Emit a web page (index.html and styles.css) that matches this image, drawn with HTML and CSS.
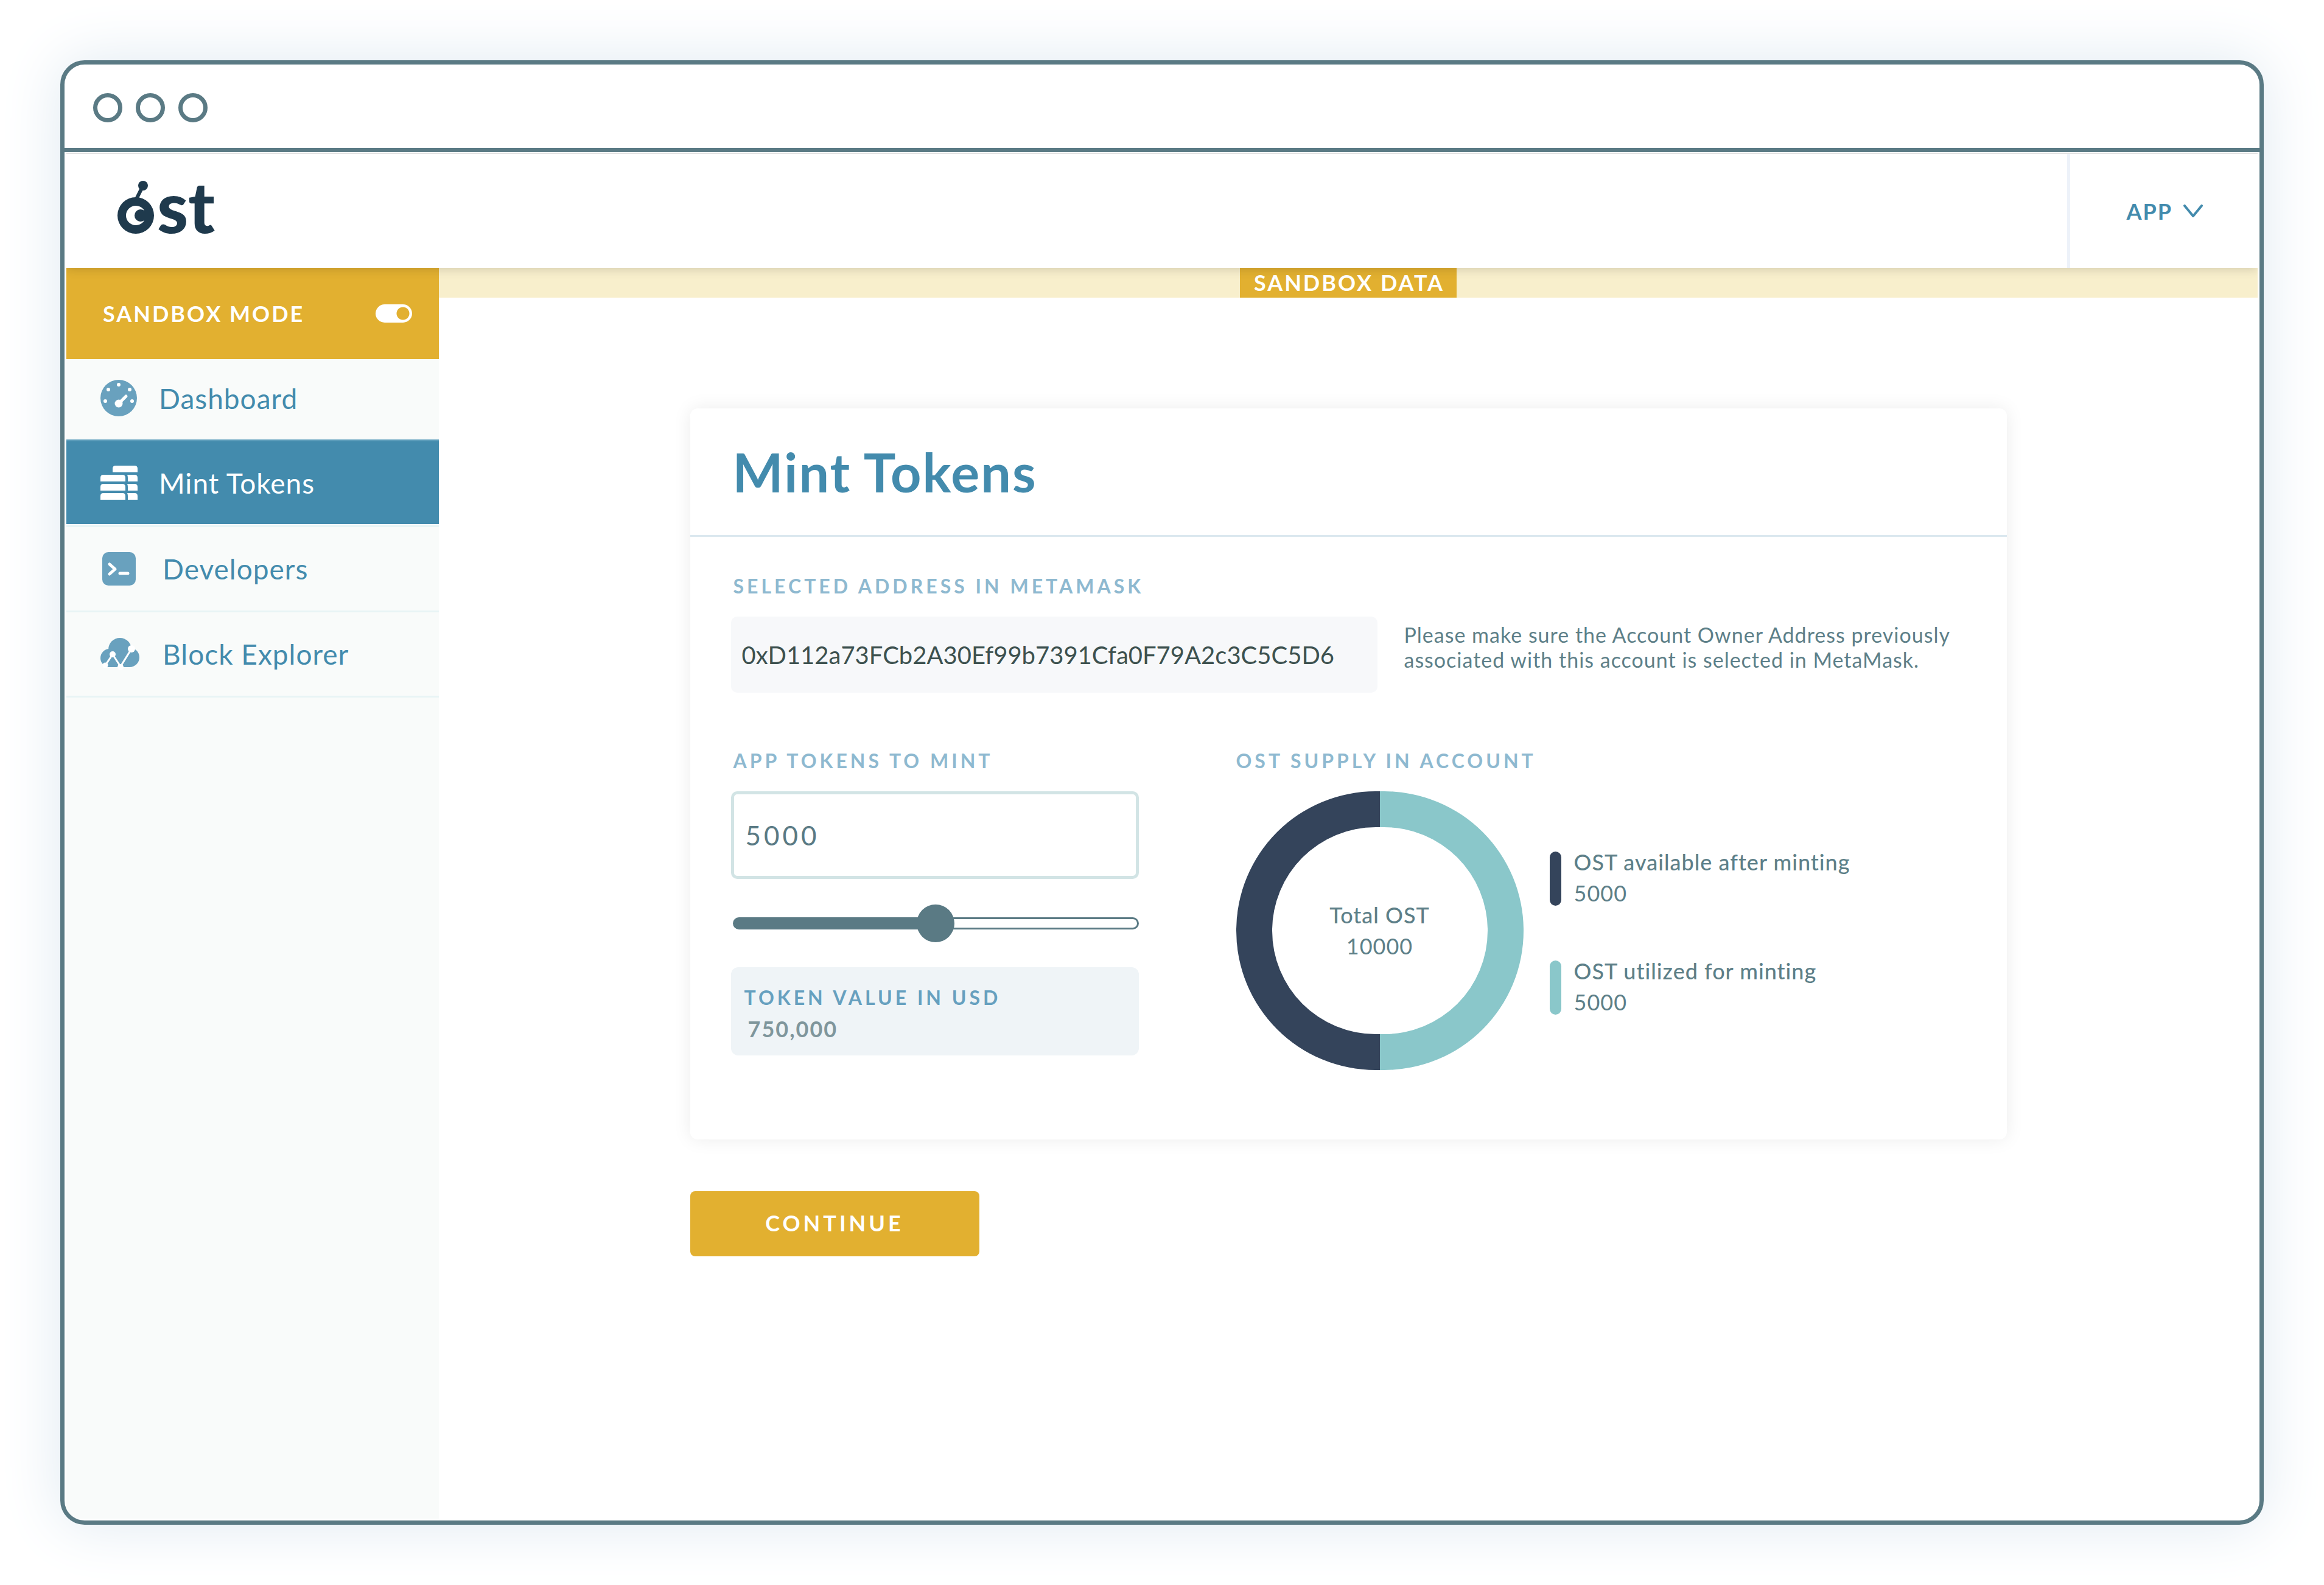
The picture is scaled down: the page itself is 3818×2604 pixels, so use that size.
FILE: index.html
```html
<!DOCTYPE html>
<html lang="en">
<head>
  <meta charset="utf-8">
  <meta name="viewport" content="width=device-width, initial-scale=1">
  <title>Mint Tokens</title>
  <link rel="stylesheet" href="styles.css">
</head>
<body>
  <div class="window">
    <div class="titlebar">
      <span class="dot"></span>
      <span class="dot"></span>
      <span class="dot"></span>
    </div>
    <div class="app">
      <header class="header">
        <a class="brand" href="#" aria-label="ost">
          <svg class="logo" viewBox="0 0 166 88" width="166" height="88">
            <circle cx="42" cy="8" r="8"/>
            <path class="antenna" d="M41 10 31 30"/>
            <path fill-rule="evenodd" d="M30 27a30 30 0 1 1 0 60a30 30 0 1 1 0-60zM30 41a16 16 0 1 0 0 32c7 0 12-4 14-8a10 10 0 1 1 0-16c-2-4-7-8-14-8z"/>
            <text x="65" y="86">st</text>
          </svg>
        </a>
        <button class="app-menu" type="button">
          APP
          <svg viewBox="0 0 32 22" width="32" height="22" aria-hidden="true"><path d="M2 2 16 19 30 2"/></svg>
        </button>
      </header>
      <div class="columns">
        <aside class="sidebar">
          <label class="mode">
            SANDBOX MODE
            <input class="switch" type="checkbox" role="switch" checked>
          </label>
          <nav>
            <a class="nav-link nav-link-first" href="#">
              <svg class="icon" viewBox="0 0 61 61" width="61" height="61" aria-hidden="true">
                <circle class="shape" cx="30" cy="30" r="30"/>
                <g class="cut">
                  <circle cx="30" cy="8" r="3"/>
                  <circle cx="13" cy="16" r="3"/>
                  <circle cx="48" cy="16" r="3"/>
                  <circle cx="8" cy="35" r="3"/>
                  <circle cx="52" cy="35" r="3"/>
                  <circle cx="30" cy="39" r="6.5"/>
                </g>
                <path class="cut-line" d="M31 38 42 27"/>
              </svg>
              Dashboard
            </a>
            <a class="nav-link nav-link-current" href="#" aria-current="page">
              <svg class="icon" viewBox="0 0 61 56" width="61" height="56" aria-hidden="true">
                <g class="cut">
                  <path d="M20 11V5q0-5 5-5h31q5 0 5 5v6z"/>
                  <path d="M0 26v-6q0-5 5-5h31q5 0 5 5v6zM0 41v-6q0-5 5-5h31q5 0 5 5v6zM0 56v-6q0-5 5-5h31q5 0 5 5v6z"/>
                  <path d="M45 26v-6q0-3-1-5h12q5 0 5 5v6zM45 41v-6q0-3-1-5h12q5 0 5 5v6zM45 56v-6q0-3-1-5h12q5 0 5 5v6z"/>
                </g>
              </svg>
              Mint Tokens
            </a>
            <a class="nav-link nav-link-ruled" href="#">
              <svg class="icon" viewBox="0 0 61 56" width="61" height="56" aria-hidden="true">
                <rect class="shape" x="3" width="55" height="55" rx="10"/>
                <path class="cut-line" d="M15 20 24 28 15 36M32 35H45"/>
              </svg>
              Developers
            </a>
            <a class="nav-link nav-link-ruled nav-link-last" href="#">
              <svg class="icon" viewBox="0 0 61 56" width="61" height="56" aria-hidden="true">
                <g class="shape">
                  <circle cx="32" cy="20" r="19"/>
                  <circle cx="15" cy="34" r="15"/>
                  <circle cx="48" cy="33" r="16"/>
                  <path d="M15 30H48V49H10z"/>
                </g>
                <path class="cut-thin" d="M8 46 20 28 33 48 51 19"/>
                <g class="cut">
                  <circle cx="8" cy="46" r="4.5"/>
                  <circle cx="20" cy="28" r="5"/>
                  <circle cx="33" cy="49" r="5"/>
                  <circle cx="51" cy="19" r="6"/>
                </g>
              </svg>
              Block Explorer
            </a>
          </nav>
        </aside>
        <div class="content">
          <div class="banner"><span class="banner-tag">SANDBOX DATA</span></div>
          <main class="main">
            <section class="card">
              <h1 class="card-title">Mint Tokens</h1>
              <div class="card-body">
                <label class="label" for="address">SELECTED ADDRESS IN METAMASK</label>
                <div class="address-row">
                  <input class="address" id="address" type="text" readonly value="0xD112a73FCb2A30Ef99b7391Cfa0F79A2c3C5C5D6">
                  <p class="note">Please make sure the Account Owner Address previously<br>associated with this account is selected in MetaMask.</p>
                </div>
                <div class="mint-row">
                  <div class="mint">
                    <label class="label" for="amount">APP TOKENS TO MINT</label>
                    <input class="amount" id="amount" type="text" inputmode="numeric" value="5000">
                    <input class="slider" type="range" min="0" max="10000" value="5000" aria-label="App tokens to mint">
                    <div class="usd">
                      <h2 class="usd-label">TOKEN VALUE IN USD</h2>
                      <p class="usd-value">750,000</p>
                    </div>
                  </div>
                  <div class="supply">
                    <h2 class="label">OST SUPPLY IN ACCOUNT</h2>
                    <div class="chart-row">
                      <div class="chart">
                        <svg viewBox="0 0 472 458" width="472" height="458" aria-hidden="true">
                          <path class="available" d="M236 0H229a229 229 0 0 0 0 458H236V399H229a170 170 0 0 1 0-340H236z"/>
                          <path class="utilized" d="M236 0H243a229 229 0 0 1 0 458H236V399H243a170 170 0 0 0 0-340H236z"/>
                        </svg>
                        <p class="total"><span class="name">Total OST</span><span>10000</span></p>
                      </div>
                      <ul class="legend">
                        <li class="legend-available"><span class="name">OST available after minting</span><span>5000</span></li>
                        <li class="legend-utilized"><span class="name">OST utilized for minting</span><span>5000</span></li>
                      </ul>
                    </div>
                  </div>
                </div>
              </div>
            </section>
            <button class="continue" type="button">CONTINUE</button>
          </main>
        </div>
      </div>
    </div>
  </div>
</body>
</html>
```
FILE: styles.css
```css
* {
  box-sizing: border-box;
  margin: 0;
  padding: 0;
}

:root {
  --slate: #5a7a84;
  --blue: #438bad;
  --blue-soft: #69a1be;
  --blue-pale: #8eb9d0;
  --gold: #e2b030;
  --navy: #34445b;
  --teal: #8ac7ca;
  --text: #5d7f88;
}

body {
  display: flex;
  min-height: 100vh;
  padding: 99px;
  background: #fff;
  color: var(--text);
  font-family: Lato, "Open Sans", sans-serif;
  font-size: 36px;
}

input,
button {
  border: 0;
  font: inherit;
}

a {
  color: inherit;
  text-decoration: none;
}

/* Browser window */

.window {
  display: flex;
  flex: 1;
  flex-direction: column;
  overflow: hidden;
  border: 7px solid var(--slate);
  border-radius: 40px;
  background: #fff;
  box-shadow: 0 0 100px #dfe9f1;
}

.titlebar {
  display: flex;
  gap: 22px;
  padding: 47px 47px 42px;
  border-bottom: 7px solid var(--slate);
}

.dot {
  width: 48px;
  height: 48px;
  border: 7px solid var(--slate);
  border-radius: 50%;
}

.app {
  display: flex;
  flex: 1;
  flex-direction: column;
  padding: 2px 3px 3px;
}

/* Header */

.header {
  position: relative;
  display: flex;
  justify-content: space-between;
  height: 188px;
  border-top: 1px solid #d8d8d8;
  background: #fff;
  box-shadow: 0 2px 16px rgba(0, 0, 0, 0.16);
  clip-path: inset(0 0 -30px 0);
}

.brand {
  padding: 44px 84px 0;
}

.logo {
  display: block;
  fill: #1f3a4d;
  font-size: 116px;
  font-weight: 900;
  overflow: visible;
}

.antenna {
  stroke: #1f3a4d;
  stroke-width: 6px;
}

.app-menu {
  display: flex;
  align-items: center;
  gap: 18px;
  padding: 0 90px 0 92px;
  border-left: 5px solid #edf2f9;
  background: none;
  color: var(--blue);
  font-weight: 700;
  letter-spacing: 2px;
}

.app-menu svg {
  fill: none;
  stroke: var(--blue);
  stroke-width: 4px;
  stroke-linecap: round;
  stroke-linejoin: round;
}

/* Sidebar */

.columns {
  display: flex;
  flex: 1;
}

.sidebar {
  width: 612px;
  background: #f9fbfa;
}

.mode {
  display: flex;
  align-items: center;
  justify-content: space-between;
  height: 150px;
  padding: 0 44px 0 60px;
  background: var(--gold);
  color: #fff;
  font-weight: 700;
  letter-spacing: 3px;
}

.switch {
  width: 60px;
  height: 30px;
  border-radius: 15px;
  appearance: none;
  background: radial-gradient(circle at 45px 15px, var(--gold) 10px, #fff 11px);
}

.nav-link {
  display: flex;
  align-items: center;
  gap: 35px;
  height: 132px;
  padding-left: 56px;
  color: var(--blue);
  font-size: 46px;
  letter-spacing: 1px;
}

.nav-link-first {
  padding-bottom: 4px;
}

.nav-link-current {
  height: 139px;
  margin-bottom: 2px;
  border-top: 3px solid #5b9cba;
  background: var(--blue);
  color: #fff;
}

.nav-link-ruled {
  gap: 41px;
  height: 140px;
  border-top: 3px solid #e8f4f5;
}

.nav-link-last {
  height: 143px;
  border-bottom: 3px solid #e8f4f5;
}

.icon {
  flex: none;
  overflow: visible;
}

.shape {
  fill: var(--blue-soft);
}

.cut {
  fill: #fff;
}

.cut-line,
.cut-thin {
  fill: none;
  stroke: #fff;
  stroke-width: 5px;
  stroke-linecap: round;
  stroke-linejoin: round;
}

.cut-thin {
  stroke-width: 3px;
}

/* Content */

.content {
  flex: 1;
}

.banner {
  display: flex;
  justify-content: center;
  background: #f8efcc;
}

.banner-tag {
  padding: 0 20px 0 23px;
  background: var(--gold);
  color: #fff;
  font-weight: 700;
  letter-spacing: 3px;
  line-height: 49px;
}

.main {
  width: 100%;
  max-width: 2163px;
  margin: 0 auto;
  padding: 182px 0 80px;
}

.card {
  border-radius: 12px;
  background: #fff;
  box-shadow: 0 0 30px rgba(0, 0, 0, 0.08);
}

.card-title {
  padding: 0 70px;
  border-bottom: 3px solid #dbe8ef;
  color: var(--blue);
  font-size: 88px;
  font-weight: 700;
  letter-spacing: 2px;
  line-height: 208px;
}

.card-body {
  padding: 61px 67px 114px;
}

.label {
  display: block;
  padding-left: 4px;
  color: var(--blue-pale);
  font-size: 32px;
  font-weight: 700;
  letter-spacing: 5px;
  line-height: 40px;
}

.address-row {
  display: flex;
  gap: 44px;
  margin: 30px 0 92px;
}

.address {
  width: 1062px;
  height: 125px;
  padding: 0 18px;
  border-radius: 10px;
  background: #f7f8fa;
  color: #3d514f;
  font-size: 40px;
}

.note {
  padding-top: 9px;
  font-size: 34px;
  letter-spacing: 1px;
  line-height: 41px;
}

.mint-row {
  display: flex;
  gap: 156px;
}

.mint {
  display: flex;
  flex-direction: column;
  width: 670px;
}

.amount {
  height: 144px;
  margin: 30px 0 41px;
  padding: 0 19px;
  border: 5px solid #d2e4e5;
  border-radius: 10px;
  background: #fff;
  color: var(--slate);
  font-size: 44px;
  letter-spacing: 5px;
}

.slider {
  height: 63px;
  margin: 0 0 41px 3px;
  appearance: none;
  background: none;
}

.slider::-webkit-slider-runnable-track {
  height: 20px;
  border: 3px solid var(--slate);
  border-radius: 10px;
  background: linear-gradient(to right, var(--slate) 50%, #fff 50%);
}

.slider::-webkit-slider-thumb {
  width: 62px;
  height: 62px;
  margin-top: -24px;
  border-radius: 50%;
  appearance: none;
  background: var(--slate);
}

.usd {
  height: 145px;
  padding: 30px 22px;
  border-radius: 12px;
  background: #eff4f7;
}

.usd-label {
  color: #66a0bf;
  font-size: 32px;
  letter-spacing: 5px;
  line-height: 40px;
}

.usd-value {
  padding: 11px 6px 0;
  color: #7f969c;
  font-weight: 700;
  letter-spacing: 2px;
  line-height: 40px;
}

.chart-row {
  display: flex;
  align-items: center;
  gap: 43px;
  margin: 30px 0 0 4px;
}

.chart {
  display: grid;
  place-items: center;
}

.chart > * {
  grid-area: 1 / 1;
}

.available {
  fill: var(--navy);
}

.utilized {
  fill: var(--teal);
}

.total {
  display: grid;
  justify-items: center;
  letter-spacing: 1px;
  line-height: 51px;
}

.name {
  font-weight: 500;
}

.legend {
  display: grid;
  gap: 90px;
  padding-top: 8px;
  letter-spacing: 1px;
  list-style: none;
}

.legend li {
  position: relative;
  display: grid;
  align-content: center;
  height: 89px;
  padding: 0 0 4px 40px;
  line-height: 51px;
}

.legend li::before {
  position: absolute;
  inset: 0 auto 0 0;
  width: 19px;
  border-radius: 10px;
  content: "";
}

.legend-available::before {
  background: var(--navy);
}

.legend-utilized::before {
  background: var(--teal);
}

.continue {
  width: 475px;
  height: 107px;
  margin-top: 85px;
  padding-bottom: 3px;
  border-radius: 8px;
  background: var(--gold);
  color: #fff;
  font-weight: 700;
  letter-spacing: 5px;
}
```
